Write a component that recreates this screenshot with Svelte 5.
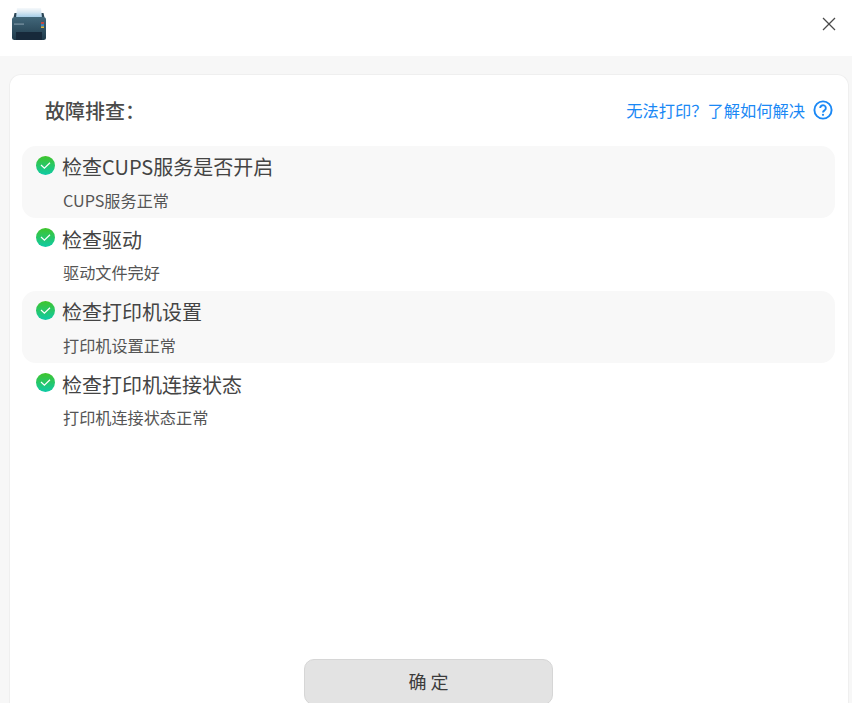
<script lang="ts">
    const checks = [
        { title: "检查CUPS服务是否开启", detail: "CUPS服务正常" },
        { title: "检查驱动", detail: "驱动文件完好" },
        { title: "检查打印机设置", detail: "打印机设置正常" },
        { title: "检查打印机连接状态", detail: "打印机连接状态正常" },
    ];
</script>

<div class="window">
    <header class="titlebar">
        <svg class="printer" width="36" height="32" viewBox="0 0 36 32">
            <defs>
                <linearGradient id="paper" x1="0" y1="0" x2="0" y2="1">
                    <stop offset="0" stop-color="#f6f9fb" />
                    <stop offset="0.4" stop-color="#dbe9f3" />
                    <stop offset="1" stop-color="#9cc8e6" />
                </linearGradient>
                <linearGradient id="body" x1="0" y1="0" x2="0" y2="1">
                    <stop offset="0" stop-color="#42677a" />
                    <stop offset="1" stop-color="#1f3a4a" />
                </linearGradient>
            </defs>
            <path d="M2.5 9.5 L3.5 5 H6 V9.5 Z M30 9.5 V5 H32.5 L33.5 9.5 Z" fill="#2c4656" />
            <path d="M6 0 H30 L31 10 H5 Z" fill="url(#paper)" />
            <rect x="1" y="9" width="34" height="23" rx="2.5" fill="url(#body)" />
            <rect x="5" y="24" width="26" height="8" fill="#17293a" />
            <rect x="3" y="15.5" width="10" height="1.2" fill="#7d95a4" />
            <rect x="30" y="14" width="3" height="2" fill="#c0483f" />
            <rect x="30" y="16.2" width="3" height="2" fill="#3d86c6" />
            <rect x="30" y="18.4" width="3" height="1.6" fill="#e0b73c" />
        </svg>
        <button class="close" aria-label="关闭">
            <svg width="14" height="14" viewBox="0 0 14 14" fill="none" stroke="#4a4a4a" stroke-width="1.3">
                <line x1="1" y1="1" x2="13" y2="13" />
                <line x1="13" y1="1" x2="1" y2="13" />
            </svg>
        </button>
    </header>

    <main class="panel">
        <div class="panel-head">
            <h1>故障排查：</h1>
            <a class="help" href="#help">
                无法打印？了解如何解决
                <svg width="20" height="20" viewBox="0 0 20 20" fill="none">
                    <circle cx="10" cy="10" r="8.6" stroke="#1a88f5" stroke-width="1.9" />
                    <path d="M7.2 8 A2.8 2.8 0 1 1 11.6 10.3 C10.5 11 10 11.3 10 12.4" stroke="#1a88f5" stroke-width="1.9" />
                    <circle cx="10" cy="14.8" r="1.1" fill="#1a88f5" />
                </svg>
            </a>
        </div>

        <ul class="checks">
            {#each checks as check, i}
                <li class="check" class:shaded={i % 2 === 0}>
                    <svg class="ok" width="19" height="19" viewBox="0 0 19 19">
                        <defs>
                            <linearGradient id="ok{i}" x1="0" y1="0" x2="0" y2="1">
                                <stop offset="0" stop-color="#3fc42a" />
                                <stop offset="1" stop-color="#0ecaa6" />
                            </linearGradient>
                        </defs>
                        <circle cx="9.5" cy="9.5" r="9.5" fill="url(#ok{i})" />
                        <path d="M5 9 L8.4 12.2 L14 6.8" fill="none" stroke="#fff" stroke-width="1.2" />
                    </svg>
                    <div class="text">
                        <div class="title">{check.title}</div>
                        <div class="detail">{check.detail}</div>
                    </div>
                </li>
            {/each}
        </ul>

        <div class="actions">
            <button class="confirm">确 定</button>
        </div>
    </main>
</div>

<style>
    :global(body) {
        margin: 0;
        background: #f7f7f7;
        font-family: "Noto Sans CJK SC", "Noto Sans", sans-serif;
    }

    .window {
        width: 852px;
        height: 703px;
        display: flex;
        flex-direction: column;
        overflow: hidden;
        background: #f7f7f7;
    }

    .titlebar {
        height: 56px;
        flex-shrink: 0;
        background: #fff;
        display: flex;
        align-items: center;
        justify-content: space-between;
        padding: 0 16px 8px 11px;
        box-sizing: border-box;
    }

    .printer {
        display: block;
    }

    .close {
        width: 14px;
        height: 14px;
        padding: 0;
        border: none;
        background: none;
        display: flex;
    }

    .panel {
        flex: 1;
        margin: 18px 3px 0 9px;
        background: #fff;
        border: 1px solid #efefef;
        border-bottom: none;
        border-radius: 12px 12px 0 0;
        display: flex;
        flex-direction: column;
        min-height: 0;
    }

    .panel-head {
        height: 70.75px;
        flex-shrink: 0;
        display: flex;
        align-items: center;
        justify-content: space-between;
        padding: 0 15px 0.75px 35px;
        box-sizing: border-box;
    }

    h1 {
        margin: 0;
        font-size: 20px;
        font-weight: 500;
        color: #4a4a4a;
    }

    .help {
        display: flex;
        align-items: center;
        gap: 8px;
        font-size: 16.25px;
        color: #1a88f5;
        text-decoration: none;
    }

    .checks {
        list-style: none;
        margin: 0 13px 0 12px;
        padding: 0;
    }

    .check {
        height: 72.5px;
        display: flex;
        gap: 7px;
        padding: 9.25px 14px 0;
        box-sizing: border-box;
        border-radius: 14px;
    }

    .shaded {
        background: #f8f8f8;
    }

    .ok {
        flex-shrink: 0;
        margin-top: 0.75px;
    }

    .title {
        font-size: 20px;
        line-height: 24px;
        color: #444;
    }

    .detail {
        margin: 8.75px 0 0 1px;
        font-size: 16.15px;
        line-height: 24px;
        color: #555;
    }

    .actions {
        margin-top: auto;
        display: flex;
        justify-content: center;
        padding-right: 1px;
    }

    .confirm {
        width: 249px;
        height: 46px;
        margin-bottom: -2px;
        padding: 0 0 2px;
        background: #e3e3e3;
        border: 1px solid #d6d6d6;
        border-radius: 10px;
        font-family: inherit;
        font-size: 18px;
        font-weight: 400;
        color: #3c3c3c;
    }
</style>
